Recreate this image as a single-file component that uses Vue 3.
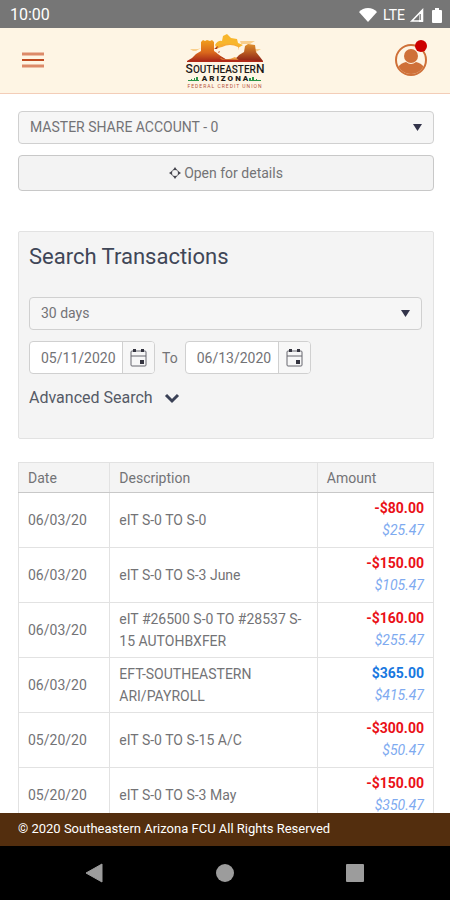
<template>
  <div class="app">
    <div class="status-bar">
      <span class="clock">10:00</span>
      <div class="signals">
        <svg width="18" height="14" viewBox="0 0 18 14" aria-hidden="true">
          <path d="M9 14 0 4C2.400 1.500 5.500 0 9 0s6.600 1.500 9 4z" fill="#fff" />
        </svg>
        <span class="network">LTE</span>
        <svg width="15" height="14" viewBox="0 0 15 14" aria-hidden="true">
          <path d="M2.800 13 13.500 2v11z" fill="none" stroke="#fff" stroke-width="1.600" />
          <path d="M10 5.500 14 1v13h-4z" fill="#fff" />
          <path d="M11.200 6v6" stroke="#767676" stroke-width="1.200" />
        </svg>
        <svg class="battery" width="10" height="15" viewBox="0 0 10 15" aria-hidden="true">
          <path d="M3 0h4v2h2q1 0 1 1v11q0 1-1 1H1q-1 0-1-1V3q0-1 1-1h2z" fill="#fff" />
        </svg>
      </div>
    </div>

    <header class="header">
      <button class="icon-button" type="button" aria-label="Menu">
        <svg width="22" height="18" viewBox="0 0 22 18">
          <path d="M0 3h22M0 15h22" stroke="#dc8a68" stroke-width="3" />
          <path d="M0 9h22" stroke="#bf4a20" stroke-width="2" />
        </svg>
      </button>

      <a class="logo" href="#" aria-label="Southeastern Arizona Federal Credit Union">
        <svg width="80" height="56" viewBox="0 0 80 56">
          <defs>
            <linearGradient id="mesa" x1="0" y1="0" x2="0" y2="1">
              <stop offset="0" stop-color="#f2a01c" />
              <stop offset=".6" stop-color="#d9661c" />
              <stop offset="1" stop-color="#a82a18" />
            </linearGradient>
            <linearGradient id="butte" x1="0" y1="0" x2="0" y2="1">
              <stop offset="0" stop-color="#e0902c" />
              <stop offset="1" stop-color="#8f2416" />
            </linearGradient>
          </defs>
          <path d="M30 12q3-5 7-4l1-5 4-2 4 4 6 1 1 4 5 2-5 3H32z" fill="#f8b62c" />
          <path d="M30 14q12-6 24-1v4H34z" fill="#f6a238" opacity=".6" />
          <path d="M5 16h8l3-1-5 3H8zM55 8h15l-5 3h-9zM64 16h12l-5 3h-9z" fill="#f9cf8c" />
          <path d="M2 28q6-3 9-7l5-3V9l2-2 2 1 2-1 3 1 2-1 2 2v9l6 4q5 4 9 6z" fill="url(#mesa)" />
          <path d="M46 28q6-3 8-6l5-3 1-6 3-2 7 1 1 7 4 5 3 4z" fill="url(#butte)" />
          <path d="M32 20q-2-5 5-6 8-4 16 0 3 7-4 10-9 4-17-4z" fill="#fef5e4" />
          <path d="m29 16 4-3-1 3zM33 19l2-1-1 2z" fill="#a93a18" />
          <path d="M35 25q7 3 15-1l5 4H38z" fill="#ee9f40" />
          <path d="M2 28q37-3 76 0v1H2z" fill="#b02a18" />
          <text class="logo-name" x="40" y="40" text-anchor="middle">
            <tspan class="logo-cap">S</tspan>OUTHEASTER<tspan class="logo-cap">N</tspan>
          </text>
          <text class="logo-state" x="41" y="48" text-anchor="middle">ARIZONA</text>
          <path d="M3 48v-1h3v-1h1v1h2v-2h1v2h1v-3h2v3h1v1zM64 48v-3h2v2h1v-3h2v3h2v-1h1v1h4v1z" fill="#299447" />
          <text class="logo-tag" x="40" y="55" text-anchor="middle">FEDERAL CREDIT UNION</text>
        </svg>
      </a>

      <button class="icon-button" type="button" aria-label="Profile">
        <svg width="34" height="38" viewBox="0 0 34 38">
          <defs>
            <clipPath id="avatar"><circle cx="17" cy="21" r="14" /></clipPath>
          </defs>
          <circle cx="17" cy="21" r="15" fill="none" stroke="#cf7038" stroke-width="2" />
          <g clip-path="url(#avatar)" fill="#cf7038">
            <circle cx="17" cy="17" r="7" />
            <path d="M4 36V28q3-4 8-5 5 4 10 0 5 1 8 5v8z" />
          </g>
          <circle cx="27" cy="7" r="6" fill="#cc0000" />
        </svg>
      </button>
    </header>

    <main class="content">
      <div class="select-box">
        <select v-model="account" class="field" aria-label="Account">
          <option>MASTER SHARE ACCOUNT - 0</option>
        </select>
        <svg class="arrow" width="9" height="7" viewBox="0 0 9 7" aria-hidden="true">
          <path d="M0 0h9L4.500 7z" />
        </svg>
      </div>

      <button class="details" type="button">
        <svg width="12" height="12" viewBox="0 0 12 12" aria-hidden="true">
          <circle cx="6" cy="6" r="3.500" fill="none" stroke="#77777c" />
          <path d="m6 0 2 3H4zM6 12 4 9h4zM0 6l3-2v4zM12 6 9 8V4z" fill="#44444d" />
        </svg>
        Open for details
      </button>

      <section class="search">
        <h2>Search Transactions</h2>
        <div class="select-box">
          <select v-model="period" class="field" aria-label="Period">
            <option>30 days</option>
          </select>
          <svg class="arrow" width="9" height="7" viewBox="0 0 9 7" aria-hidden="true">
            <path d="M0 0h9L4.500 7z" />
          </svg>
        </div>

        <div class="dates">
          <template v-for="(date, index) in dates" :key="date.id">
            <label v-if="index > 0" :for="date.id">To</label>
            <div class="date-field">
              <input :id="date.id" v-model="date.value" type="text" :aria-label="date.label">
              <button type="button" :aria-label="'Choose ' + date.label">
                <svg width="17" height="19" viewBox="0 0 17 19">
                  <rect x="1" y="3" width="15" height="15" rx="1" fill="none" stroke="#66666f" />
                  <path d="M1 8h15" stroke="#66666f" />
                  <path d="M3 1h3v3H3zM11 1h3v3h-3zM10 12h4v4h-4z" fill="#34343f" />
                </svg>
              </button>
            </div>
          </template>
        </div>

        <button class="advanced" type="button" :aria-expanded="showAdvanced" @click="showAdvanced = !showAdvanced">
          Advanced Search
          <svg width="16" height="11" viewBox="0 0 16 11" aria-hidden="true">
            <path d="m2 2 6 6 6-6" fill="none" stroke="#3a4156" stroke-width="3" />
          </svg>
        </button>
      </section>

      <table class="transactions">
        <thead>
          <tr>
            <th class="col-date">Date</th>
            <th class="col-description">Description</th>
            <th class="col-amount">Amount</th>
          </tr>
        </thead>
        <tbody>
          <tr v-for="item in transactions" :key="item.balance">
            <td>{{ item.date }}</td>
            <td>{{ item.description }}</td>
            <td class="amounts">
              <strong :class="{ credit: !item.amount.startsWith('-') }">{{ item.amount }}</strong>
              <em>{{ item.balance }}</em>
            </td>
          </tr>
        </tbody>
      </table>
    </main>

    <footer class="footer">© 2020 Southeastern Arizona FCU All Rights Reserved</footer>

    <nav class="system-nav">
      <button type="button" aria-label="Back">
        <svg width="20" height="20" viewBox="0 0 20 20"><path d="M17 1v18L1 10z" fill="#9c9c9c" stroke="#9c9c9c" stroke-linejoin="round" /></svg>
      </button>
      <button type="button" aria-label="Home">
        <svg width="20" height="20" viewBox="0 0 20 20"><circle cx="10" cy="10" r="9" fill="#9c9c9c" /></svg>
      </button>
      <button type="button" aria-label="Recent apps">
        <svg width="20" height="20" viewBox="0 0 20 20"><rect x="1" y="1" width="18" height="18" rx="1" fill="#9c9c9c" /></svg>
      </button>
    </nav>
  </div>
</template>

<script setup>
import { ref } from "vue"

const account = ref("MASTER SHARE ACCOUNT - 0")
const period = ref("30 days")
const showAdvanced = ref(false)

const dates = ref([
  { id: "date-from", label: "start date", value: "05/11/2020" },
  { id: "date-to", label: "end date", value: "06/13/2020" }
])

const transactions = [
  { date: "06/03/20", description: "eIT S-0 TO S-0", amount: "-$80.00", balance: "$25.47" },
  { date: "06/03/20", description: "eIT S-0 TO S-3 June", amount: "-$150.00", balance: "$105.47" },
  { date: "06/03/20", description: "eIT #26500 S-0 TO #28537 S-15 AUTOHBXFER", amount: "-$160.00", balance: "$255.47" },
  { date: "06/03/20", description: "EFT-SOUTHEASTERN ARI/PAYROLL", amount: "$365.00", balance: "$415.47" },
  { date: "05/20/20", description: "eIT S-0 TO S-15 A/C", amount: "-$300.00", balance: "$50.47" },
  { date: "05/20/20", description: "eIT S-0 TO S-3 May", amount: "-$150.00", balance: "$350.47" }
]
</script>

<style>
body {
  margin: 0;
  background: #fff;
}
</style>

<style scoped>
.app {
  display: flex;
  flex-direction: column;
  height: 100vh;
  overflow: hidden;
  color: #737376;
  font-family: Roboto, "Liberation Sans", sans-serif;
  font-size: 14px;
  line-height: 22px;
}

.app *,
.app *::before {
  box-sizing: border-box;
}

button,
input,
select {
  margin: 0;
  color: inherit;
  font: inherit;
}

button {
  padding: 0;
  border: 0;
  background: transparent;
  cursor: pointer;
}

svg {
  display: block;
}

.status-bar {
  display: flex;
  flex: none;
  align-items: center;
  justify-content: space-between;
  height: 28px;
  padding: 2px 8px 0 10px;
  color: #fff;
  background: #767676;
}

.clock {
  font-size: 16px;
}

.signals {
  display: flex;
  align-items: center;
  gap: 4px;
}

.network {
  margin-left: 2px;
  font-size: 14px;
}

.battery {
  margin-left: 4px;
}

.header {
  display: grid;
  flex: none;
  grid-template-columns: 1fr auto 1fr;
  align-items: center;
  height: 66px;
  padding: 0 22px;
  border-bottom: 1px solid #f3cdb8;
  background: #fef5e4;
}

.header .icon-button:last-child {
  justify-self: end;
  margin-bottom: 6px;
}

.header .icon-button:first-child {
  justify-self: start;
  margin-bottom: 2px;
}

.logo-name {
  fill: #1d1a18;
  font-size: 10px;
  font-weight: 500;
}

.logo-cap {
  font-size: 12px;
}

.logo-state {
  fill: #1d1a18;
  font-size: 8px;
  font-weight: 900;
  letter-spacing: 2px;
}

.logo-tag {
  fill: #b5543c;
  font-size: 5px;
  letter-spacing: 1px;
}

.content {
  display: flex;
  flex: 1;
  flex-direction: column;
  min-height: 0;
  padding: 17px 16px 0 18px;
  overflow: hidden;
}

.content > * {
  flex: none;
}

.select-box {
  display: grid;
  align-items: center;
}

.field {
  grid-area: 1 / 1;
  width: 100%;
  height: 33px;
  padding: 0 32px 2px 11px;
  border: 1px solid #d0d0d0;
  border-radius: 4px;
  background: #f6f6f6;
  appearance: none;
}

.arrow {
  grid-area: 1 / 1;
  justify-self: end;
  margin-right: 12px;
  fill: #33344a;
  pointer-events: none;
}

.details {
  display: flex;
  align-items: center;
  justify-content: center;
  gap: 3px;
  height: 36px;
  margin-top: 11px;
  border: 1px solid #c8c8c8;
  border-radius: 4px;
  background: #f3f3f3;
}

.search {
  height: 208px;
  margin-top: 40px;
  padding: 12px 11px 12px 10px;
  border: 1px solid #e2e2e2;
  border-radius: 2px;
  background: #f4f4f4;
}

.search h2 {
  margin: 0 0 27px;
  color: #3f4657;
  font-size: 22px;
  font-weight: 400;
  line-height: 26px;
}

.dates {
  display: flex;
  align-items: center;
  gap: 7px;
  margin-top: 11px;
}

.date-field {
  display: flex;
  width: 126px;
  height: 33px;
  border: 1px solid #d0d0d0;
  border-radius: 4px;
  background: #fff;
}

.date-field input {
  flex: 1;
  min-width: 0;
  padding: 0 0 0 11px;
  border: 0;
  background: transparent;
}

.date-field button {
  display: grid;
  width: 32px;
  place-items: center;
  border-left: 1px solid #d0d0d0;
  border-radius: 0 3px 3px 0;
  background: #f7f7f7;
}

.advanced {
  display: flex;
  align-items: center;
  gap: 11px;
  margin-top: 13px;
  color: #555a66;
  font-size: 16px;
}

.transactions {
  width: 100%;
  margin-top: 23px;
  border-collapse: collapse;
  table-layout: fixed;
}

.transactions th,
.transactions td {
  padding: 5px 9px;
  border: 1px solid #e2e2e2;
  text-align: left;
}

.transactions th {
  padding: 4px 9px 3px;
  border-bottom-color: #c8c8c8;
  background: #f4f4f4;
  font-weight: 400;
}

.col-date {
  width: 22%;
}

.col-description {
  width: 50%;
}

.col-amount {
  width: 28%;
}

.transactions .amounts {
  padding: 4px 9px 6px;
  text-align: right;
}

.amounts strong,
.amounts em {
  display: block;
}

.amounts strong {
  color: #ea1018;
  font-weight: 700;
}

.amounts .credit {
  color: #1878e0;
}

.amounts em {
  color: #7eaaf0;
}

.footer {
  flex: none;
  height: 33px;
  padding: 5px 18px;
  color: #fff;
  background: #532e0e;
  font-size: 13px;
}

.system-nav {
  display: grid;
  flex: none;
  grid-template-columns: repeat(3, 130px);
  justify-content: center;
  height: 54px;
  background: #000;
}

.system-nav button {
  display: grid;
  place-items: center;
}
</style>
